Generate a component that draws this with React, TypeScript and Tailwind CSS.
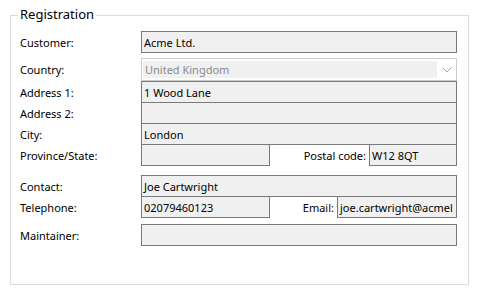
import React from 'react';

const Box = ({ value, className = '' }: { value?: string; className?: string }) => (
  <div
    className={`h-[22px] border border-[#7a7a7a] bg-[#f0f0f0] px-[2px] flex items-center overflow-hidden whitespace-nowrap text-black ${className}`}
  >
    {value}
  </div>
);

const Row = ({ label, children, className = '' }: { label: string; children: React.ReactNode; className?: string }) => (
  <div className={`flex items-center ${className}`}>
    <div className="w-[121px] shrink-0 text-black">{label}</div>
    <div className="w-[316px] flex items-center">{children}</div>
  </div>
);

const App = () => {
  return (
    <div
      className="w-[478px] h-[295px] bg-white pt-[15px] pl-[10px] text-[11px] leading-none"
      style={{ fontFamily: '"Noto Sans", "Liberation Sans", sans-serif' }}
    >
      <div className="relative w-[459px] h-[270px] border border-[#dcdcdc] pl-[9px]">
        {/* Legend over the top border */}
        <span className="absolute left-[7px] top-[-8px] bg-white px-[2px] text-[13px] text-black">
          Registration
        </span>

        <div className="flex flex-col pt-[15px]">
          <Row label="Customer:">
            <Box value="Acme Ltd." className="w-full h-[21px]" />
          </Row>

          <Row label="Country:" className="mt-[5px]">
            <div className="w-full h-[23px] border border-[#cccccc] flex items-center pl-[1px]">
              <div className="flex-1 h-[17px] bg-[#f0f0f0] flex items-center px-[2px] text-[#8a8a8a]">
                United Kingdom
              </div>
              <div className="w-[19px] flex items-center justify-center">
                <svg width="10" height="6" viewBox="0 0 10 6" fill="none">
                  <path d="M0.5 0.5 L5 5 L9.5 0.5" stroke="#a8a8a8" strokeWidth="1" />
                </svg>
              </div>
            </div>
          </Row>

          <Row label="Address 1:">
            <Box value="1 Wood Lane" className="w-full" />
          </Row>
          <Row label="Address 2:" className="-mt-px">
            <Box className="w-full" />
          </Row>
          <Row label="City:" className="-mt-px">
            <Box value="London" className="w-full" />
          </Row>
          <Row label="Province/State:" className="-mt-px">
            <Box className="w-[129px]" />
            <div className="flex-1 text-right pr-[3px]">Postal code:</div>
            <Box value="W12 8QT" className="w-[88px]" />
          </Row>

          <Row label="Contact:" className="mt-[9px]">
            <Box value="Joe Cartwright" className="w-full" />
          </Row>
          <Row label="Telephone:" className="-mt-px">
            <Box value="02079460123" className="w-[129px]" />
            <div className="flex-1 text-right pr-[3px]">Email:</div>
            <Box value="joe.cartwright@acmel" className="w-[120px]" />
          </Row>

          <Row label="Maintainer:" className="mt-[6px]">
            <Box className="w-full" />
          </Row>
        </div>
      </div>
    </div>
  );
};

export default App;
